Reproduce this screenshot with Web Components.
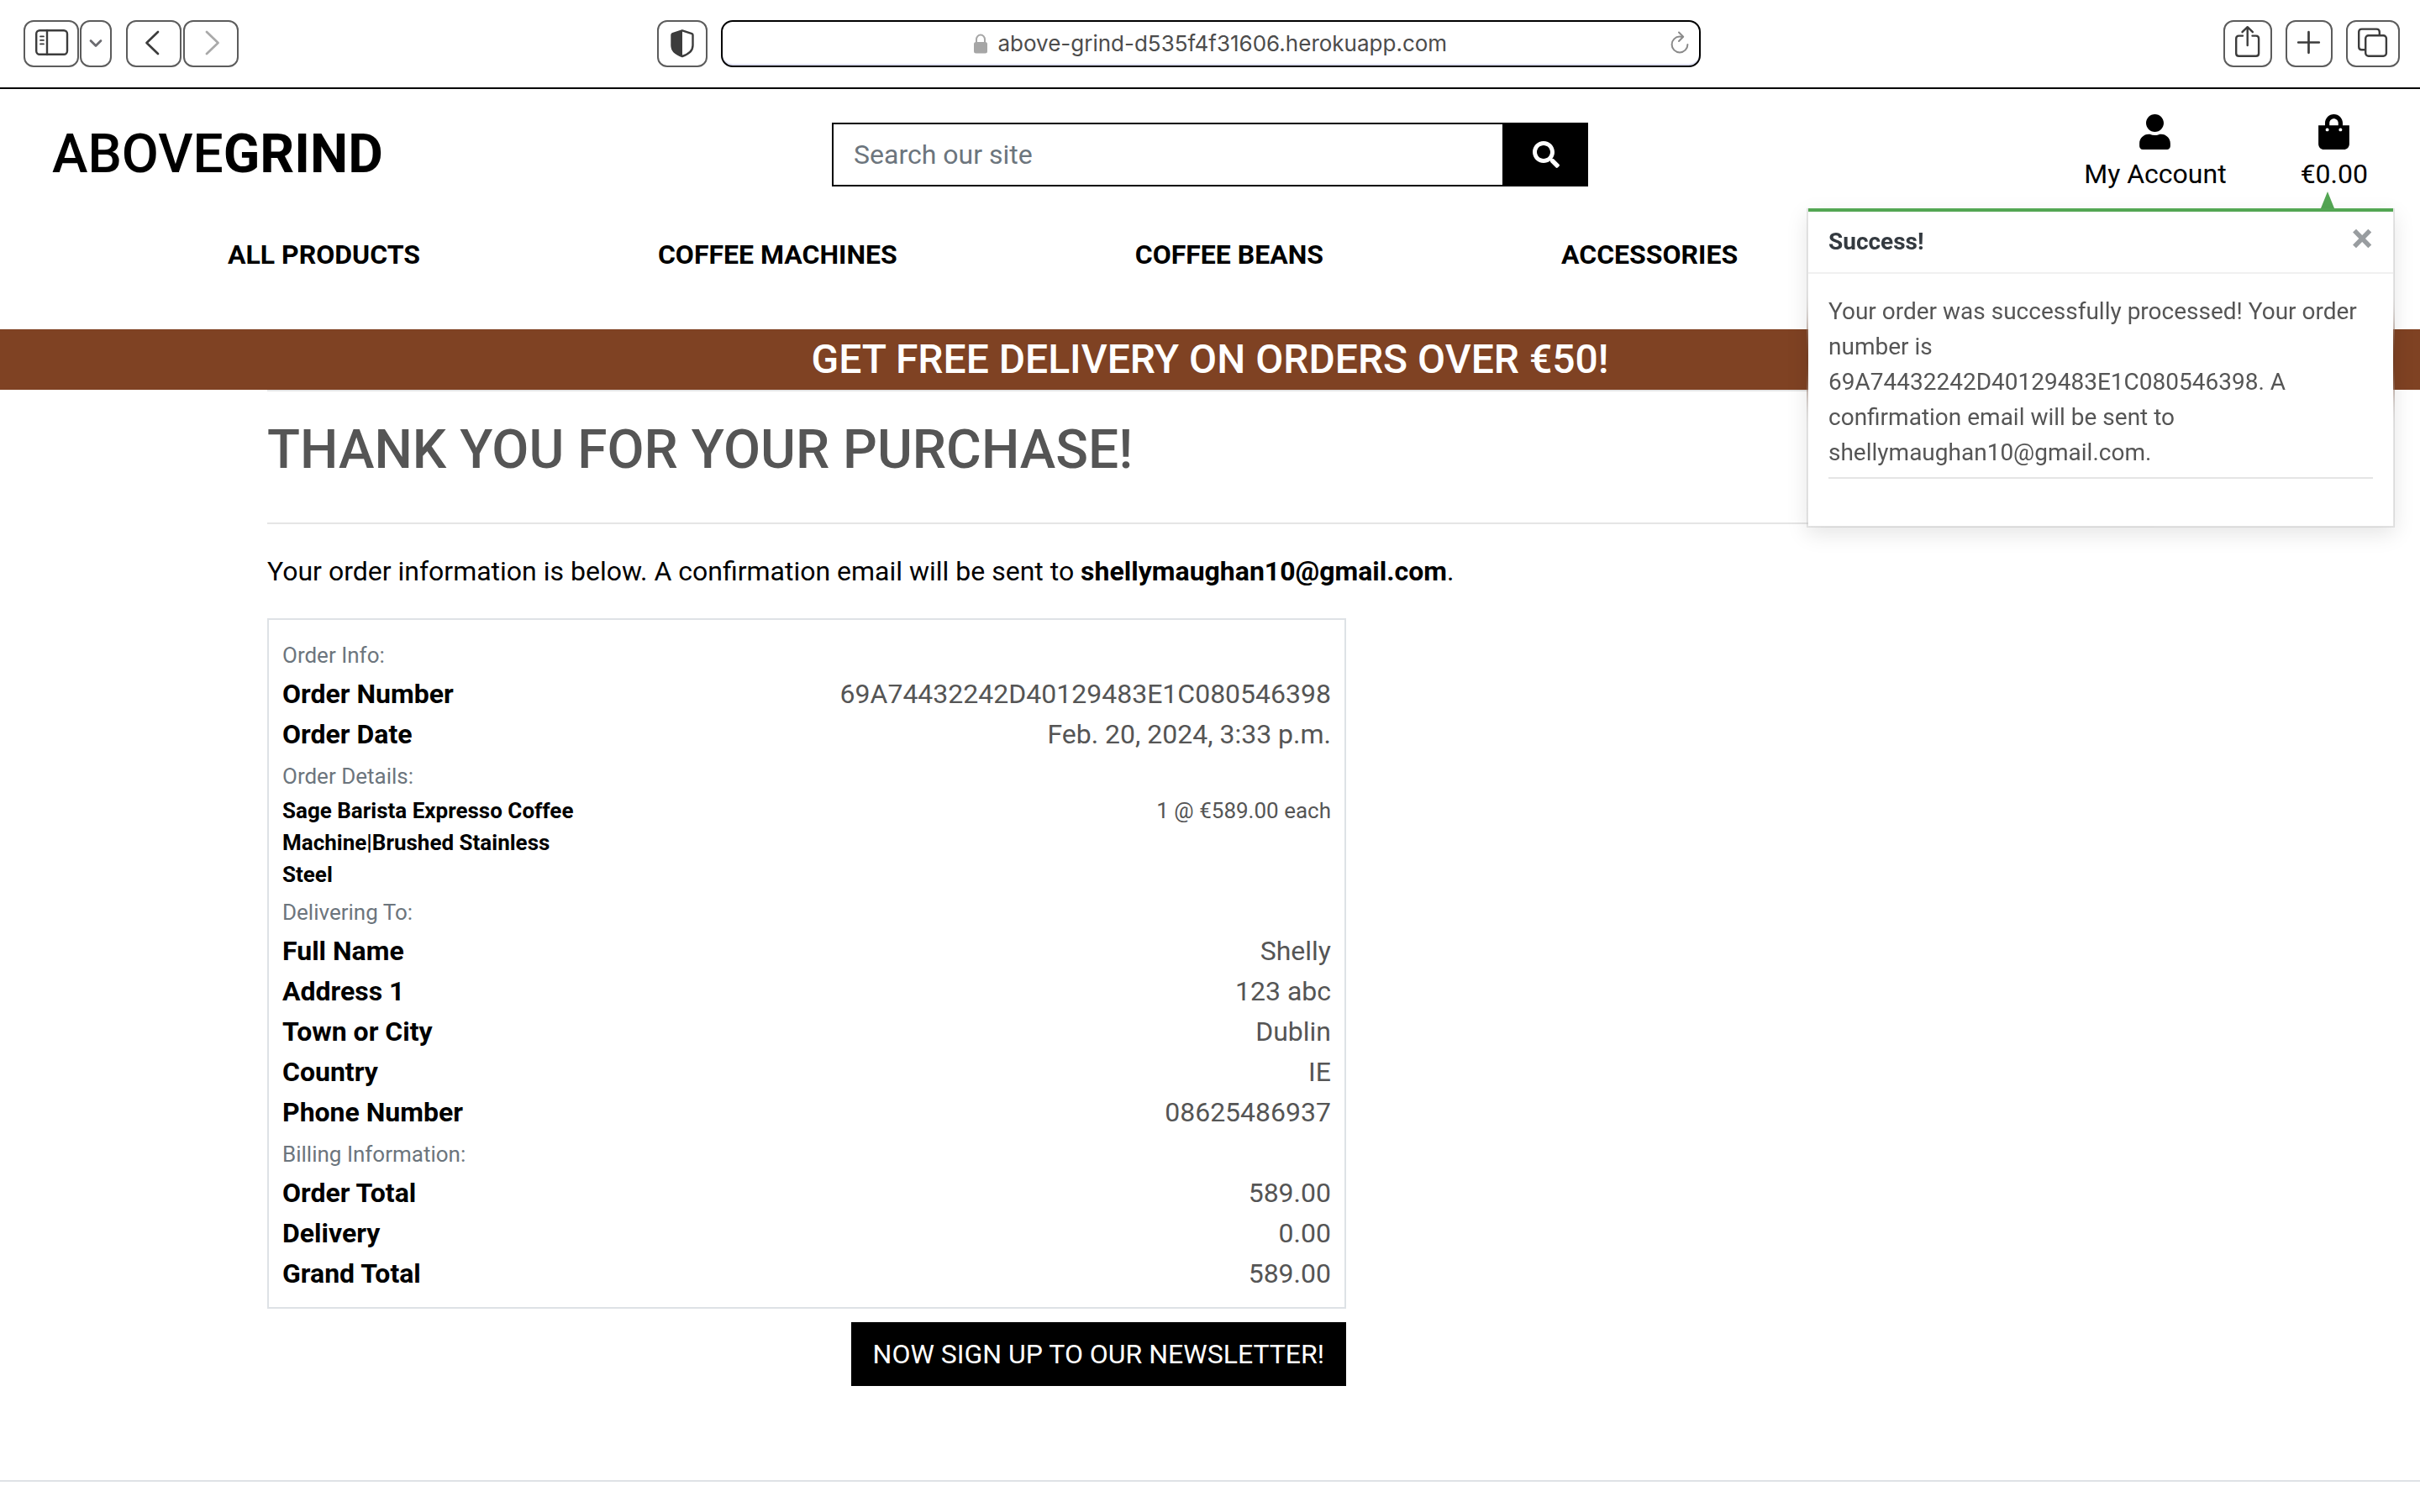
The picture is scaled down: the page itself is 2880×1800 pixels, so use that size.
<!DOCTYPE html>
<html lang="en">
<head>
<meta charset="utf-8">
<title>Above Grind</title>
<style>
  body {
    margin: 0;
    position: relative;
    min-height: 100vh;
    background: #fff;
    color: #000;
    font: 400 32px/48px Roboto, sans-serif;
  }
</style>
</head>
<body>
<browser-toolbar url="above-grind-d535f4f31606.herokuapp.com"></browser-toolbar>
<shop-header total="€0.00"></shop-header>
<delivery-banner>GET FREE DELIVERY ON ORDERS OVER €50!</delivery-banner>
<checkout-success email="shellymaughan10@gmail.com">
  <order-summary></order-summary>
</checkout-success>
<toast-notice heading="Success!">Your order was successfully processed! Your order number is 69A74432242D40129483E1C080546398. A confirmation email will be sent to shellymaughan10@gmail.com.</toast-notice>

<script>
const reset = `
  *, *::before, *::after { box-sizing: border-box; }
  button, input { font: inherit; color: inherit; margin: 0; padding: 0; border: 0; background: none; border-radius: 0; outline: 0; }
  a { color: inherit; text-decoration: none; }
  svg { display: block; }
`;

function define(name, render) {
  customElements.define(name, class extends HTMLElement {
    constructor() {
      super();
      this.attachShadow({ mode: 'open' });
    }
    connectedCallback() {
      const template = document.createElement('template');
      template.innerHTML = `<style>${reset}</style>` + render(this);
      this.shadowRoot.replaceChildren(template.content.cloneNode(true));
    }
  });
}

/* One square toolbar button; the icon is slotted in. */
define('tool-button', el => `
  <style>
    :host { display: block; color: #3c3c3c; }
    button { display: block; height: 56px; border: 2px solid #5c5c5c; border-radius: 12px; overflow: hidden; }
    ::slotted(svg) { display: block; margin: -2px; fill: none; stroke: currentColor; stroke-width: 2.4; stroke-linecap: round; stroke-linejoin: round; }
  </style>
  <button type="button" aria-label="${el.getAttribute('label')}"><slot></slot></button>
`);

define('browser-toolbar', el => `
  <style>
    :host { display: block; border-bottom: 2px solid #000; }
    .bar { display: flex; align-items: center; padding: 24px 24px 24px 28px; }
    .group { display: flex; }
    .pair { gap: 1px; margin-right: 17px; }
    .nav { gap: 2px; }
    .right, .middle { gap: 16px; }
    .before { flex: 4; }
    .after { flex: 5; }
    .address { display: flex; align-items: center; justify-content: center; position: relative;
      width: 1166px; height: 56px; border: 2px solid #000; border-radius: 14px; box-shadow: inset 0 -2px #dfe1f5;
      gap: 12px; font: 400 26px/32px Inter, sans-serif; color: #4c4c4c; }
    .address input { field-sizing: content; }
    .reload { position: absolute; right: 10px; top: 10px; }
    .muted { color: #a9a9a9; }
    .soft { color: #6b6b70; }
  </style>
  <div class="bar">
    <div class="group pair">
      <tool-button label="Show sidebar"><svg width="66" height="56"><rect x="15.2" y="12.2" width="36.8" height="28.6" rx="4"/><path d="M28 12v29"/><path stroke-width="1.7" d="M20 19.4h4M20 23.9h4M20 28.4h4"/></svg></tool-button>
      <tool-button class="soft" label="Tab groups"><svg width="38" height="56"><path stroke-width="2.8" d="M13 24.6l6 5.8 6-5.8"/></svg></tool-button>
    </div>
    <div class="group nav">
      <tool-button label="Back"><svg width="66" height="56"><path stroke-width="2.7" d="M38 14L24.5 27 38 40"/></svg></tool-button>
      <tool-button class="muted" label="Forward"><svg width="66" height="56"><path stroke-width="2.7" d="M28 14l13.5 13L28 40"/></svg></tool-button>
    </div>
    <div class="before"></div>
    <div class="group middle">
      <tool-button label="Privacy report"><svg width="60" height="56"><path d="M30 12.4l11.500 3.800q1 .4 1 1.500V30c0 6-5 10.500-12.500 13-7.500-2.500-12.500-7-12.500-13V17.700q0-1.100 1-1.500z"/><path fill="currentColor" stroke="none" d="M30 11.500V43.500l-3-1C20 39.500 17 35 17 30V17z"/></svg></tool-button>
      <div class="address">
        <svg width="16" height="24" viewBox="0 0 16 24"><path fill="none" stroke="#a6a6a6" stroke-width="2" d="M3 12V7a5 5.500 0 0 1 10 0v5"/><rect y="10" width="16" height="13.500" rx="2.500" fill="#a6a6a6"/></svg>
        <input type="text" aria-label="Address" value="${el.getAttribute('url')}">
        <button class="reload" type="button" aria-label="Reload"><svg width="26" height="32" viewBox="0 0 26 32" fill="none" stroke="#8a8a8a" stroke-width="2" stroke-linecap="round" stroke-linejoin="round"><path d="M16 8c-1-.3-2-.4-3-.4a9.400 9.400 0 1 0 9.400 9.400"/><path d="M12 2.500l5.200 5.300L12 13"/></svg></button>
      </div>
    </div>
    <div class="after"></div>
    <div class="group right">
      <tool-button label="Share"><svg width="58" height="56"><path d="M23 18.600h-4.500q-3.300 0-3.300 3.300v17.500q0 3.300 3.300 3.300h20.300q3.300 0 3.300-3.300v-17.500q0-3.300-3.300-3.300H34.500"/><path d="M28.700 30V8.200M22.500 14.200l6.200-6 6.200 6"/></svg></tool-button>
      <tool-button label="New tab"><svg width="56" height="56"><path stroke-width="2.700" d="M27.500 14.200v24.600M15.200 26.500h24.600"/></svg></tool-button>
      <tool-button label="Tab overview"><svg width="64" height="56"><path d="M22.500 35.200h-3.800q-3.500 0-3.500-3.500V14.100q0-3.500 3.500-3.500h17.600q3.500 0 3.500 3.500v3.500"/><rect x="23.200" y="18.200" width="24.700" height="24.600" rx="3.500"/></svg></tool-button>
    </div>
  </div>
`);

define('shop-header', el => `
  <style>
    :host { display: block; }
    header { padding-top: 30px; }
    .top { display: grid; grid-template-columns: repeat(3, 1fr); align-items: center; }
    .top > * { margin: 0 30px; }
    .logo { padding-left: 32px; font-size: 64px; line-height: 76px; font-weight: 500; }
    .logo strong { font-weight: 700; }
    form { display: flex; height: 76px; }
    form input { flex: 1; min-width: 0; padding: 0 24px; border: 2px solid #000; }
    form input::placeholder { color: #6c757d; opacity: 1; }
    form button { width: 100px; background: #000; color: #fff; display: flex; align-items: center; justify-content: center; }
    .tools { display: flex; justify-content: flex-end; gap: 88px; padding-right: 32px; }
    .tools a { display: flex; flex-direction: column; align-items: center; gap: 5px; }
    nav { display: flex; gap: 283px; padding: 48px 0 65px 271px; font-weight: 700; white-space: nowrap; }
  </style>
  <header>
    <div class="top">
      <a class="logo" href="#">ABOVE<strong>GRIND</strong></a>
      <form>
        <input type="text" aria-label="Search our site" placeholder="Search our site">
        <button type="button" aria-label="Search"><svg width="32" height="32" viewBox="0 0 512 512" fill="currentColor"><path d="M505 442.700L405.300 343c-4.500-4.500-10.600-7-17-7H372c27.600-35.300 44-79.700 44-128C416 93.100 322.900 0 208 0S0 93.100 0 208s93.100 208 208 208c48.300 0 92.700-16.400 128-44v16.300c0 6.400 2.500 12.500 7 17l99.700 99.700c9.400 9.400 24.600 9.400 33.900 0l28.300-28.300c9.400-9.400 9.400-24.600.1-34zM208 336c-70.700 0-128-57.200-128-128 0-70.700 57.200-128 128-128 70.700 0 128 57.200 128 128 0 70.700-57.200 128-128 128z"/></svg></button>
      </form>
      <div class="tools">
        <a href="#"><svg width="37" height="42" viewBox="0 0 448 512"><path d="M224 256c70.700 0 128-57.300 128-128S294.700 0 224 0 96 57.300 96 128s57.300 128 128 128zm89.600 32h-16.700c-22.200 10.200-46.900 16-72.900 16s-50.600-5.800-72.900-16h-16.700C60.200 288 0 348.200 0 422.400V464c0 26.500 21.500 48 48 48h352c26.500 0 48-21.500 48-48v-41.600c0-74.200-60.200-134.400-134.400-134.400z"/></svg><span>My Account</span></a>
        <a href="#"><svg width="37" height="42" viewBox="0 0 448 512"><path d="M352 160v-32C352 57.420 294.579 0 224 0 153.420 0 96 57.420 96 128v32H0v272c0 44.183 35.817 80 80 80h288c44.183 0 80-35.817 80-80V160h-96zm-192-32c0-35.290 28.710-64 64-64s64 28.710 64 64v32H160v-32zm160 120c-13.255 0-24-10.745-24-24s10.745-24 24-24 24 10.745 24 24-10.745 24-24 24zm-192 0c-13.255 0-24-10.745-24-24s10.745-24 24-24 24 10.745 24 24-10.745 24-24 24z"/></svg><span>${el.getAttribute('total')}</span></a>
      </div>
    </div>
    <nav>
      <a href="#">ALL PRODUCTS</a>
      <a href="#">COFFEE MACHINES</a>
      <a href="#">COFFEE BEANS</a>
      <a href="#">ACCESSORIES</a>
    </nav>
  </header>
`);

define('delivery-banner', () => `
  <style>
    :host { display: block; background: #7f4223; color: #fff; text-align: center; }
    h4 { margin: 0; font-size: 48px; line-height: 72px; font-weight: 500; }
  </style>
  <h4><slot></slot></h4>
`);

define('checkout-success', el => `
  <style>
    :host { display: block; border-bottom: 2px solid #dee2e6; padding-bottom: 112px; }
    main { width: 80%; margin: 0 auto; padding: 0 30px; }
    hr { height: 2px; margin: 0; border: 0; background: #e5e5e5; }
    h2 { margin: 32px 0 48px; font-size: 64px; line-height: 76px; font-weight: 500; color: #555; }
    p { margin: 32px 0; }
    .order { width: calc((100% + 60px) * 7 / 12 - 60px); display: flex; flex-direction: column; gap: 16px; }
    .cta { align-self: flex-end; padding: 14px 26px; background: #000; color: #fff; }
  </style>
  <main>
    <hr>
    <h2>THANK YOU FOR YOUR PURCHASE!</h2>
    <hr>
    <p>Your order information is below. A confirmation email will be sent to <strong>${el.getAttribute('email')}</strong>.</p>
    <div class="order">
      <slot></slot>
      <a class="cta" href="#">NOW SIGN UP TO OUR NEWSLETTER!</a>
    </div>
  </main>
`);

const order = [
  ['Order Info:', [['Order Number', '69A74432242D40129483E1C080546398'], ['Order Date', 'Feb. 20, 2024, 3:33 p.m.']]],
  ['Order Details:', [['Sage Barista Expresso Coffee Machine|Brushed Stainless Steel', '1 @ €589.00 each', 'small']]],
  ['Delivering To:', [['Full Name', 'Shelly'], ['Address 1', '123 abc'], ['Town or City', 'Dublin'], ['Country', 'IE'], ['Phone Number', '08625486937']]],
  ['Billing Information:', [['Order Total', '589.00'], ['Delivery', '0.00'], ['Grand Total', '589.00']]],
];

define('order-summary', () => `
  <style>
    :host { display: block; border: 2px solid #dee2e6; padding: 16px; }
    h6 { margin: 0; font-size: 32px; line-height: 48px; font-weight: 400; color: #6c757d; }
    h6 small { font-size: 26px; line-height: 38px; }
    dl { margin: 0; }
    dl div { display: flex; justify-content: space-between; }
    dt { width: 30%; font-weight: 700; white-space: nowrap; }
    dd { margin: 0; color: #555; text-align: right; }
    .small { font-size: 26px; line-height: 38px; }
    .small dt { white-space: normal; }
  </style>
  ${order.map(([title, rows]) => `
    <h6><small>${title}</small></h6>
    <dl>${rows.map(([k, v, size = '']) => `<div class="${size}"><dt>${k}</dt><dd>${v}</dd></div>`).join('')}</dl>
  `).join('')}
`);

define('toast-notice', el => `
  <style>
    :host { position: absolute; top: 248px; right: 30px; width: 700px; font-size: 28px; line-height: 42px; color: #555; }
    .arrow { position: absolute; top: -20px; right: 72px; border: solid transparent; border-width: 0 8px 20px; border-bottom-color: #53a653; }
    .toast { border: 2px solid rgba(0,0,0,.1); border-top: 0; background: #fff; background-clip: padding-box; box-shadow: 0 8px 24px rgba(0,0,0,.1); backdrop-filter: blur(20px); }
    .head { display: flex; align-items: center; justify-content: space-between; height: 78px; padding: 0 24px; border-top: 4px solid #53a653; border-bottom: 2px solid #f0f0f0; color: #343a40; }
    .head button { font-size: 48px; line-height: 48px; font-weight: 700; color: #999da0; padding-bottom: 8px; }
    .body { padding: 24px 24px 56px; }
    hr { height: 2px; border: 0; margin: 8px 0 0; background: #e5e5e5; }
  </style>
  <div class="arrow"></div>
  <div class="toast" role="status">
    <div class="head"><strong>${el.getAttribute('heading')}</strong><button type="button" aria-label="Close">×</button></div>
    <div class="body"><slot></slot><hr></div>
  </div>
`);
</script>
</body>
</html>
